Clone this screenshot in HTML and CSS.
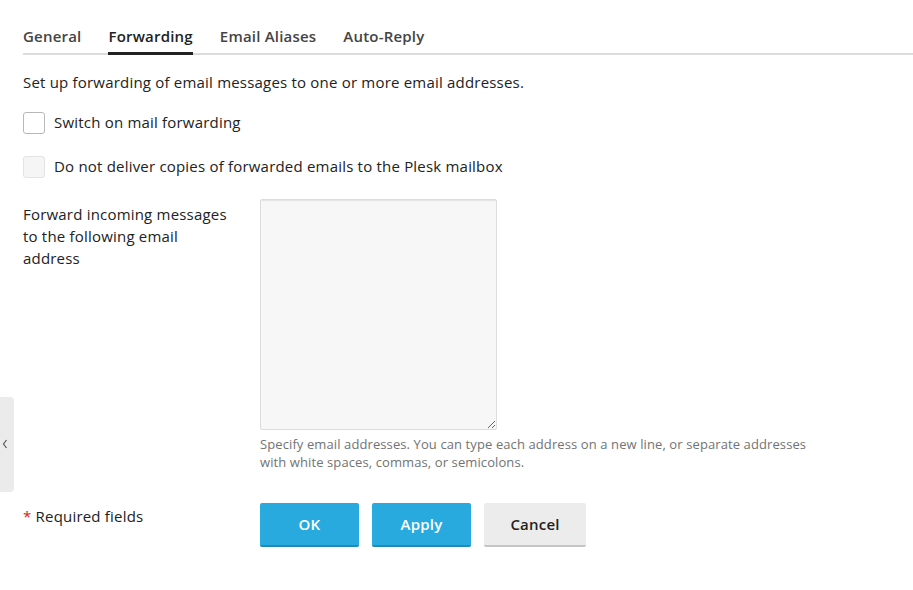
FILE: index.html
```html
<!DOCTYPE html>
<html lang="en">
<head>
<meta charset="utf-8">
<title>Forwarding</title>
<link rel="stylesheet" href="styles.css">
</head>
<body>
<div class="side-toggle">
  <svg class="side-chevron" width="6" height="10" viewBox="0 0 6 10"><path d="M4.5 1 L1.5 5 L4.5 9" fill="none" stroke="#555" stroke-width="1.2"/></svg>
</div>
<main class="page">
  <nav class="tabs">
    <a class="tab">General</a>
    <a class="tab tab-active">Forwarding</a>
    <a class="tab">Email Aliases</a>
    <a class="tab">Auto-Reply</a>
  </nav>
  <p class="intro">Set up forwarding of email messages to one or more email addresses.</p>
  <div class="checks">
    <label class="check-row"><span class="box"></span><span class="check-text">Switch on mail forwarding</span></label>
    <label class="check-row"><span class="box box-disabled"></span><span class="check-text">Do not deliver copies of forwarded emails to the Plesk mailbox</span></label>
  </div>
  <div class="form-row">
    <div class="field-label">Forward incoming messages to the following email address</div>
    <div class="field">
      <textarea class="addresses"></textarea>
      <div class="hint">Specify email addresses. You can type each address on a new line, or separate addresses with white spaces, commas, or semicolons.</div>
    </div>
  </div>
  <div class="form-row actions-row">
    <div class="field-label required"><span class="star">*</span> Required fields</div>
    <div class="buttons">
      <button class="btn btn-primary btn-ok">OK</button>
      <button class="btn btn-primary btn-apply">Apply</button>
      <button class="btn btn-cancel">Cancel</button>
    </div>
  </div>
</main>
</body>
</html>
```
FILE: styles.css
```css
html, body {
  margin: 0;
  padding: 0;
  background: #fff;
}
body {
  font-family: "Open Sans", "Liberation Sans", sans-serif;
  font-size: 15px;
  letter-spacing: 0.2px;
  color: #222;
  width: 913px;
  height: 590px;
  overflow: hidden;
}
.side-toggle {
  position: absolute;
  left: 0;
  top: 397px;
  width: 14px;
  height: 95px;
  background: #ebebeb;
  border-radius: 0 4px 4px 0;
  display: flex;
  align-items: center;
  justify-content: flex-start;
}
.side-chevron {
  margin-left: 2px;
  margin-top: -2px;
}
.page {
  padding: 26px 0 0 23px;
}
.tabs {
  display: flex;
  gap: 27px;
  border-bottom: 2px solid #dcdcdc;
}
.tab {
  font-size: 15px;
  font-weight: 600;
  line-height: 20px;
  color: #444;
  padding-bottom: 6px;
  border-bottom: 3px solid transparent;
  margin-bottom: -2px;
}
.tab-active {
  color: #222;
  border-bottom-color: #222;
}
.intro {
  margin: 17px 0 0;
  line-height: 20px;
}
.checks {
  margin-top: 20px;
  display: flex;
  flex-direction: column;
  gap: 22px;
}
.check-row {
  display: flex;
  align-items: center;
  gap: 9px;
  height: 22px;
}
.check-text {
  line-height: 20px;
  padding-bottom: 2px;
}
.box {
  width: 20px;
  height: 20px;
  border: 1px solid #b8b8b8;
  border-radius: 3px;
  background: #fff;
  flex: none;
}
.box-disabled {
  border-color: #e3e3e3;
  background: #f5f5f5;
}
.form-row {
  display: flex;
  margin-top: 21px;
}
.field-label {
  width: 212px;
  margin-right: 25px;
  padding-top: 4px;
  line-height: 22px;
  flex: none;
}
.field {
  display: flex;
  flex-direction: column;
}
.addresses {
  box-sizing: border-box;
  width: 237px;
  height: 231px;
  margin: 0;
  border: 1px solid #dcdcdc;
  border-radius: 2px;
  background: #f7f7f7;
  box-shadow: inset 0 2px 1px -1px rgba(0,0,0,0.08);
  font-family: inherit;
  font-size: 15px;
}
.hint {
  margin-top: 5px;
  width: 560px;
  font-size: 13px;
  letter-spacing: 0.1px;
  line-height: 18px;
  color: #737373;
}
.actions-row {
  margin-top: 32px;
}
.required {
  padding-top: 2px;
}
.star {
  color: #d02020;
}
.buttons {
  display: flex;
  gap: 13px;
}
.btn {
  box-sizing: border-box;
  height: 44px;
  border: none;
  border-radius: 2px;
  font-family: inherit;
  font-size: 15px;
  font-weight: 600;
  letter-spacing: 0.2px;
  padding: 0;
  cursor: pointer;
}
.btn-primary {
  width: 99px;
  background: #28aadf;
  color: #fff;
  border-bottom: 2px solid #1e8bb8;
}
.btn-cancel {
  width: 102px;
  background: #ececec;
  color: #222;
  border-bottom: 2px solid #c4c4c4;
}
```
